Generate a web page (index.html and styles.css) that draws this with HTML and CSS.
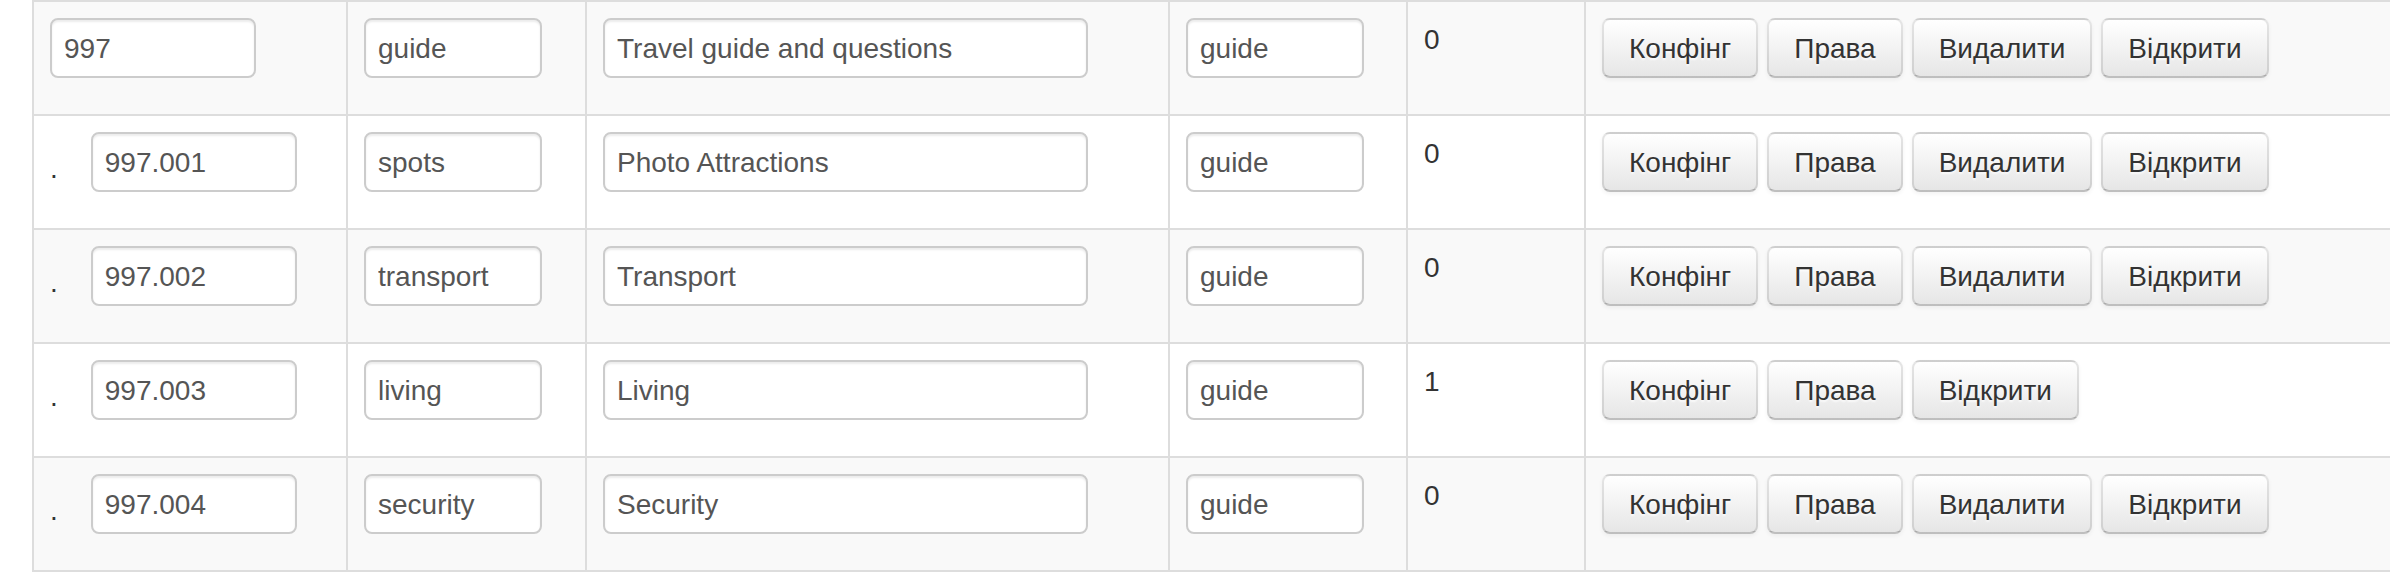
FILE: index.html
```html
<!DOCTYPE html>
<html lang="uk">
<head>
  <meta charset="UTF-8">
  <title>Розділи</title>
  <link rel="stylesheet" href="styles.css">
</head>
<body>
  <div class="sections">
    <table class="table table-bordered table-striped">
      <tbody>
        <tr>
          <td class="col-code"><div class="code-cell"><input type="text" class="input-code" value="997"></div></td>
          <td class="col-name"><input type="text" class="input-short" value="guide"></td>
          <td class="col-title"><input type="text" class="input-wide" value="Travel guide and questions"></td>
          <td class="col-type"><input type="text" class="input-short" value="guide"></td>
          <td class="col-count">0</td>
          <td class="col-actions">
            <button class="btn">Конфінг</button><button class="btn">Права</button><button class="btn">Видалити</button><button class="btn">Відкрити</button>
          </td>
        </tr>
        <tr>
          <td><div class="code-cell"><span class="level">.</span><input type="text" class="input-code" value="997.001"></div></td>
          <td><input type="text" class="input-short" value="spots"></td>
          <td><input type="text" class="input-wide" value="Photo Attractions"></td>
          <td><input type="text" class="input-short" value="guide"></td>
          <td class="col-count">0</td>
          <td>
            <button class="btn">Конфінг</button><button class="btn">Права</button><button class="btn">Видалити</button><button class="btn">Відкрити</button>
          </td>
        </tr>
        <tr>
          <td><div class="code-cell"><span class="level">.</span><input type="text" class="input-code" value="997.002"></div></td>
          <td><input type="text" class="input-short" value="transport"></td>
          <td><input type="text" class="input-wide" value="Transport"></td>
          <td><input type="text" class="input-short" value="guide"></td>
          <td class="col-count">0</td>
          <td>
            <button class="btn">Конфінг</button><button class="btn">Права</button><button class="btn">Видалити</button><button class="btn">Відкрити</button>
          </td>
        </tr>
        <tr>
          <td><div class="code-cell"><span class="level">.</span><input type="text" class="input-code" value="997.003"></div></td>
          <td><input type="text" class="input-short" value="living"></td>
          <td><input type="text" class="input-wide" value="Living"></td>
          <td><input type="text" class="input-short" value="guide"></td>
          <td class="col-count">1</td>
          <td>
            <button class="btn">Конфінг</button><button class="btn">Права</button><button class="btn">Відкрити</button>
          </td>
        </tr>
        <tr>
          <td><div class="code-cell"><span class="level">.</span><input type="text" class="input-code" value="997.004"></div></td>
          <td><input type="text" class="input-short" value="security"></td>
          <td><input type="text" class="input-wide" value="Security"></td>
          <td><input type="text" class="input-short" value="guide"></td>
          <td class="col-count">0</td>
          <td>
            <button class="btn">Конфінг</button><button class="btn">Права</button><button class="btn">Видалити</button><button class="btn">Відкрити</button>
          </td>
        </tr>
      </tbody>
    </table>
  </div>
</body>
</html>
```

FILE: styles.css
```css
html, body {
  overflow: hidden;
}

body {
  margin: 0;
  background: #fff;
  font-family: "Liberation Sans", Arial, sans-serif;
  font-size: 28px;
  line-height: 40px;
  color: #333;
}

.sections {
  padding-left: 32px;
}

.table {
  width: 2400px;
  table-layout: fixed;
  border-spacing: 0;
  border-collapse: separate;
}

.table td {
  padding: 16px;
  vertical-align: top;
  text-align: left;
  border-top: 2px solid #ddd;
  border-left: 2px solid #ddd;
}

.table-bordered {
  border: 2px solid #ddd;
  border-top: 0;
  border-left: 0;
}

.table-striped tbody tr:nth-child(odd) td {
  background-color: #f9f9f9;
}

.col-code { width: 280px; }
.col-name { width: 205px; }
.col-title { width: 549px; }
.col-type { width: 204px; }
.col-count { width: 144px; }

.table td.col-count {
  padding-top: 18px;
  padding-bottom: 14px;
}

.code-cell {
  display: flex;
  align-items: flex-start;
}

.level {
  margin-top: 17px;
  margin-right: 33px;
}

input {
  box-sizing: border-box;
  display: block;
  height: 60px;
  margin: 0 0 20px;
  padding: 9px 12px 7px;
  font-family: inherit;
  font-size: 28px;
  line-height: 40px;
  color: #555;
  background: #fff;
  border: 2px solid #ccc;
  border-radius: 8px;
  box-shadow: inset 0 2px 2px rgba(0,0,0,0.075);
  outline: none;
}

.input-code { width: 206px; }
.input-short { width: 178px; }
.input-wide { width: 485px; }

.btn {
  box-sizing: border-box;
  display: inline-block;
  height: 60px;
  margin: 0 9px 0 0;
  padding: 9px 25px 7px;
  font-family: inherit;
  font-size: 28px;
  line-height: 40px;
  color: #333;
  text-shadow: 0 2px 2px rgba(255,255,255,0.75);
  background: linear-gradient(to bottom, #fff, #e6e6e6);
  border: 2px solid #ccc;
  border-color: rgba(0,0,0,0.1) rgba(0,0,0,0.1) rgba(0,0,0,0.25);
  border-radius: 8px;
  box-shadow: inset 0 2px 0 rgba(255,255,255,0.2), 0 2px 4px rgba(0,0,0,0.05);
  cursor: pointer;
}
```
